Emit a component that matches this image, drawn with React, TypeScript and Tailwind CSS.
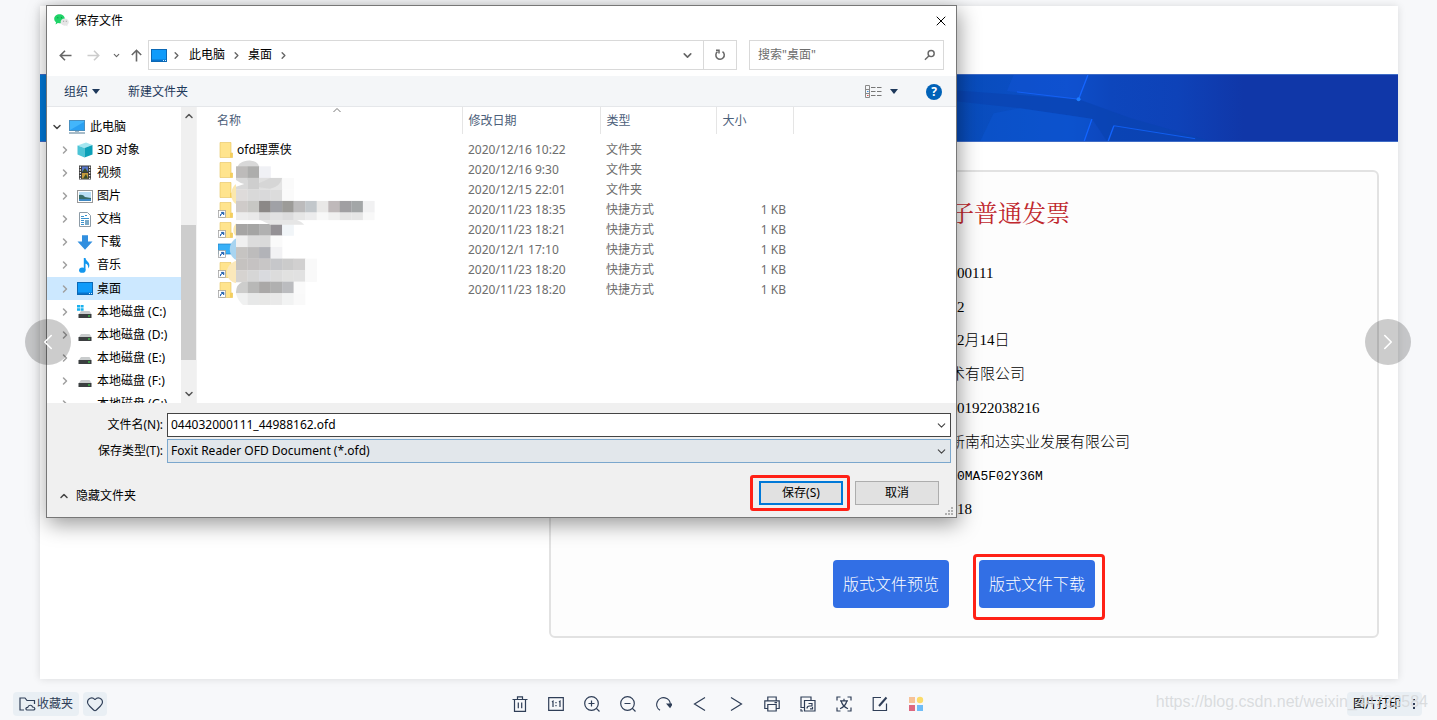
import { useState } from "react";
import type { ReactNode } from "react";
import { ChevronDown, ChevronLeft, ChevronRight, ChevronUp, Heart, X } from "lucide-react";

interface FileRow {
  name: string;
  icon: "folder" | "link" | "pc";
  date: string;
  type: string;
  size: string;
}

const FILES: FileRow[] = [
  { name: "ofd理票侠", icon: "folder", date: "2020/12/16 10:22", type: "文件夹", size: "" },
  { name: "", icon: "folder", date: "2020/12/16 9:30", type: "文件夹", size: "" },
  { name: "", icon: "folder", date: "2020/12/15 22:01", type: "文件夹", size: "" },
  { name: "", icon: "link", date: "2020/11/23 18:35", type: "快捷方式", size: "1 KB" },
  { name: "", icon: "link", date: "2020/11/23 18:21", type: "快捷方式", size: "1 KB" },
  { name: "", icon: "pc", date: "2020/12/1 17:10", type: "快捷方式", size: "1 KB" },
  { name: "", icon: "link", date: "2020/11/23 18:20", type: "快捷方式", size: "1 KB" },
  { name: "", icon: "link", date: "2020/11/23 18:20", type: "快捷方式", size: "1 KB" },
];

const TREE: Array<{ label: string; icon: ReactNode }> = [
  { label: "3D 对象", icon: <CubeIcon /> },
  { label: "视频", icon: <FilmIcon /> },
  { label: "图片", icon: <PictureIcon /> },
  { label: "文档", icon: <DocIcon /> },
  { label: "下载", icon: <DownloadIcon /> },
  { label: "音乐", icon: <MusicIcon /> },
  { label: "桌面", icon: <DesktopIcon /> },
  { label: "本地磁盘 (C:)", icon: <DriveIcon system /> },
  { label: "本地磁盘 (D:)", icon: <DriveIcon /> },
  { label: "本地磁盘 (E:)", icon: <DriveIcon /> },
  { label: "本地磁盘 (F:)", icon: <DriveIcon /> },
  { label: "本地磁盘 (G:)", icon: <DriveIcon /> },
];

export default function App() {
  return (
    <div className="relative flex min-h-screen flex-col bg-[#f7f8fa] font-['Noto_Sans','Noto_Sans_CJK_SC',sans-serif] text-xs text-black">
      <main className="relative grow pl-10 pr-[39px] pt-[6px]">
        <InvoicePage />
        <SaveDialog />
        <button aria-label="上一张" className="absolute left-[25px] top-[319px] flex size-[46px] items-center justify-center rounded-full bg-black/20 text-white">
          <ChevronLeft size={26} strokeWidth={1.5} />
        </button>
        <button aria-label="下一张" className="absolute right-[26px] top-[319px] flex size-[46px] items-center justify-center rounded-full bg-black/20 text-white">
          <ChevronRight size={26} strokeWidth={1.5} />
        </button>
      </main>
      <ViewerBar />
    </div>
  );
}

function InvoicePage() {
  return (
    <div className="bg-white pb-[41px] pt-[68px] shadow-[0_0_8px_rgba(0,0,0,0.12)]">
      <Banner />
      <section className="ml-[509px] mr-[19px] mt-[28px] rounded-md border-2 border-[#e2e2e2] bg-[#fdfdfd] pb-[28px] pt-[26px]">
        <h1 className="pl-[399px] font-['Liberation_Serif','Noto_Serif_CJK_SC','Noto_Sans_CJK_SC',serif] text-2xl leading-8 text-[#c0272d]">子普通发票</h1>
        <div className="mt-[27px] grid h-[270px] grid-rows-8 items-center pl-[399px] font-['Liberation_Serif','Noto_Sans_CJK_SC',serif] text-[15px] font-light text-black">
          <p className="pl-[7px]">00111</p>
          <p className="pl-[7px]">2</p>
          <p className="pl-[7px]">2月14日</p>
          <p>术有限公司</p>
          <p className="pl-[7px]">01922038216</p>
          <p>新南和达实业发展有限公司</p>
          <p className="pl-[7px] font-['Liberation_Mono',monospace] text-[13px]">0MA5F02Y36M</p>
          <p className="pl-[7px]">18</p>
        </div>
        <div className="mt-[33px] flex justify-center gap-[30px]">
          <button className="h-12 w-[116px] rounded bg-[#326fe5] text-base font-light text-white">版式文件预览</button>
          <div className="relative">
            <button className="h-12 w-[116px] rounded bg-[#326fe5] text-base font-light text-white">版式文件下载</button>
            <div className="pointer-events-none absolute -bottom-3 -left-[6px] -right-[10px] -top-[6px] rounded-sm border-[3px] border-[#ff2116]" />
          </div>
        </div>
      </section>
    </div>
  );
}

function Banner() {
  return (
    <div className="flex h-[68px] justify-end border-y border-[#3f6cc6] bg-[#0078d7]">
      <svg viewBox="0 0 1324 199" className="h-full w-[441px]" preserveAspectRatio="none">
        <defs>
          <linearGradient id="sky">
            <stop offset="0" stopColor="#084cba" />
            <stop offset="0.25" stopColor="#0d4fca" />
            <stop offset="0.35" stopColor="#0d46bc" />
            <stop offset="0.5" stopColor="#0e42b8" />
            <stop offset="0.65" stopColor="#1037a8" />
            <stop offset="1" stopColor="#1037a8" />
          </linearGradient>
        </defs>
        <rect width="1324" height="199" fill="url(#sky)" />
        <path d="M0 47 L365 73 L520 130 L760 199 L450 199 L405 132 L190 100 L0 80Z" fill="#0a43b0" opacity=".7" />
        <path d="M170 0 L150 48 L365 73 L392 0Z" fill="#1255d8" opacity=".45" />
        <path d="M110 115 L190 100 L405 132 L380 199 L70 199Z" fill="#0b55d2" opacity=".5" />
        <path d="M180 51 L365 73" fill="none" stroke="#1565ff" strokeWidth="3" opacity=".8" />
        <path d="M365 73 L393 0" fill="none" stroke="#1565ff" strokeWidth="4" />
        <path d="M405 133 L382 199 M454 199 L471 153" fill="none" stroke="#1264ff" strokeWidth="4" />
        <path d="M471 153 L715 192" fill="none" stroke="#1264ff" strokeWidth="3" opacity=".8" />
        <circle cx="365" cy="73" r="6" fill="#1d7dff" />
      </svg>
    </div>
  );
}

function SaveDialog() {
  const [fileName, setFileName] = useState("044032000111_44988162.ofd");

  return (
    <div role="dialog" aria-label="保存文件" className="absolute left-[46px] top-[5px] w-[911px] border border-[#777] bg-white shadow-[2px_6px_20px_rgba(0,0,0,0.4)]">
      {/* title */}
      <div className="flex h-[29px] items-center pl-[7px] pr-[7px]">
        <WechatIcon />
        <span className="ml-[6px]">保存文件</span>
        <button aria-label="关闭" className="ml-auto">
          <X size={16} strokeWidth={1.5} />
        </button>
      </div>

      {/* address bar */}
      <div className="flex items-center pb-[6px] pl-3 pr-3 pt-[5px] text-[#666]">
        <button aria-label="后退"><ArrowIcon /></button>
        <button aria-label="前进" className="ml-[15px] text-[#ccc]"><ArrowIcon className="rotate-180" /></button>
        <button aria-label="最近" className="ml-3"><ChevronDown size={9} strokeWidth={3} /></button>
        <button aria-label="向上" className="ml-[9px]"><ArrowIcon className="rotate-90" /></button>
        <div className="ml-[5px] flex h-[30px] grow items-center border border-[#d9d9d9] pl-[2px] text-black">
          <DesktopIcon />
          <ChevronRight size={11} strokeWidth={3} className="ml-[4px] text-[#666]" />
          <span className="ml-[7px]">此电脑</span>
          <ChevronRight size={11} strokeWidth={3} className="ml-[6px] text-[#666]" />
          <span className="ml-[6px]">桌面</span>
          <ChevronRight size={11} strokeWidth={3} className="ml-[6px] text-[#666]" />
          <button aria-label="展开" className="ml-auto mr-[9px] text-[#666]"><ChevronDown size={13} strokeWidth={3} /></button>
          <button aria-label="刷新" className="flex h-full w-[33px] items-center justify-center border-l border-[#d9d9d9] text-[#666]">
            <svg width="12" height="12" viewBox="0 0 12 12" fill="none" stroke="currentColor" strokeWidth="1.5">
              <path d="M8.5 2.6 A4.2 4.2 0 1 1 3.5 2.7 M2 1.2 H5 V4.5" />
            </svg>
          </button>
        </div>
        <div className="ml-3 flex h-[30px] w-[195px] items-center border border-[#d9d9d9] px-[8px]">
          <input aria-label="搜索桌面" placeholder={'搜索"桌面"'} className="min-w-0 grow outline-none placeholder:text-[#6d6d6d]" />
          <svg width="12" height="12" viewBox="0 0 12 12" fill="none" stroke="currentColor" strokeWidth="1.5">
            <circle cx="7.5" cy="4.5" r="3.2" />
            <path d="M5 7 L1 11" />
          </svg>
        </div>
      </div>

      {/* commands */}
      <div className="flex h-[31px] items-center border-b border-[#e5e7ea] bg-[#f4f6f8] pl-[17px] pr-[14px] pt-px text-[#1e395b]">
        <button className="flex items-center gap-1">组织<TriangleDown /></button>
        <button className="ml-7">新建文件夹</button>
        <button aria-label="视图" className="ml-auto flex items-center gap-2">
          <ViewIcon />
          <TriangleDown />
        </button>
        <button aria-label="帮助" className="ml-7 flex size-4 items-center justify-center rounded-full bg-[#0062b8] font-bold text-white">?</button>
      </div>

      <div className="flex h-[296px]">
        <FolderTree />
        <FileList />
      </div>

      {/* footer */}
      <div className="bg-[#f0f0f0] pb-[12px] pl-3 pr-[5px] pt-[10px]">
        <div className="grid grid-cols-[104px_1fr] items-center gap-x-1 gap-y-[2px]">
          <label htmlFor="file-name" className="text-right">文件名(N):</label>
          <div className="flex h-6 items-center border border-[#444] bg-white pl-[3px] pr-[2px]">
            <input id="file-name" value={fileName} onChange={e => setFileName(e.target.value)} className="min-w-0 grow outline-none" />
            <ChevronDown size={13} className="text-[#444]" />
          </div>
          <label htmlFor="file-type" className="text-right">保存类型(T):</label>
          <div className="flex h-6 items-center border border-[#7ba7cd] bg-[#e2e7eb] pl-[3px] pr-[2px]">
            <select id="file-type" className="grow appearance-none outline-none">
              <option>Foxit Reader OFD Document (*.ofd)</option>
            </select>
            <ChevronDown size={13} className="text-[#444]" />
          </div>
        </div>
        <div className="mt-[18px] flex items-center pr-3">
          <button className="flex items-center gap-[6px] pt-[6px]">
            <ChevronUp size={12} strokeWidth={3} className="-ml-[1px] text-[#444]" />
            隐藏文件夹
          </button>
          <div className="relative ml-auto">
            <button className="h-6 w-[84px] border-2 border-[#0078d7] bg-[#e1e1e1]">保存(S)</button>
            <div className="pointer-events-none absolute -left-[9px] -right-[7px] -inset-y-[6px] rounded-[3px] border-[3px] border-[#ff2116]" />
          </div>
          <button className="ml-3 h-6 w-[84px] border border-[#adadad] bg-[#e1e1e1]">取消</button>
        </div>
      </div>
      <svg width="9" height="9" viewBox="0 0 9 9" className="absolute bottom-[1px] right-[2px]" fill="#b0b0b0">
        <path d="M6 0h2v2h-2z M6 3h2v2h-2z M6 6h2v2h-2z M3 3h2v2h-2z M3 6h2v2h-2z M0 6h2v2h-2z" />
      </svg>
    </div>
  );
}

function FolderTree() {
  return (
    <div className="flex w-[150px] shrink-0 border-r border-[#f3f3f3]">
      <div className="h-full grow overflow-hidden pt-2">
        <ul className="grid h-[301px] grid-rows-13">
          <li className="flex items-center whitespace-nowrap pl-1">
            <ChevronDown size={12} strokeWidth={3} className="text-[#444]" />
            <span className="ml-[6px]"><PcIcon /></span>
            <span className="ml-[5px]">此电脑</span>
          </li>
          {TREE.map(t => (
            <li key={t.label} className={`flex items-center whitespace-nowrap pl-3 ${t.label === "桌面" ? "bg-[#cce8ff]" : ""}`}>
              <ChevronRight size={12} strokeWidth={3} className="shrink-0 text-[#a0a0a0]" />
              <span className="ml-[6px] shrink-0">{t.icon}</span>
              <span className="ml-[4px]">{t.label}</span>
            </li>
          ))}
        </ul>
      </div>
      <div className="flex w-[15px] shrink-0 flex-col items-center bg-[#f0f0f0] py-[3px] text-[#555]">
        <ChevronUp size={12} strokeWidth={3} />
        <div className="mt-[103px] h-[135px] w-full bg-[#cdcdcd]" />
        <ChevronDown size={12} strokeWidth={3} className="mt-auto" />
      </div>
    </div>
  );
}

function FileList() {
  return (
    <div className="relative grow">
      <table className="w-full table-fixed text-left text-[#6d6d6d]">
        <thead>
          <tr className="h-[27px] text-[#4c607a]">
            <th className="w-[265px] border-r border-[#e5e5e5] pl-5 font-normal">名称</th>
            <th className="w-[138px] border-r border-[#e5e5e5] pl-[6px] font-normal">修改日期</th>
            <th className="w-[116px] border-r border-[#e5e5e5] pl-[6px] font-normal">类型</th>
            <th className="w-[77px] border-r border-[#e5e5e5] pl-[6px] font-normal">大小</th>
            <th className="font-normal" />
          </tr>
        </thead>
        <tbody className="before:block before:h-[6px]">
          {FILES.map((f, i) => (
            <tr key={i} className="h-5">
              <td className="pl-[21px] text-black">
                <div className="flex items-center gap-1">
                  <FileIcon kind={f.icon} />
                  {f.name}
                </div>
              </td>
              <td className="pl-[6px]">{f.date}</td>
              <td className="pl-[6px]">{f.type}</td>
              <td className="pr-[7px] text-right">{f.size}</td>
              <td />
            </tr>
          ))}
        </tbody>
      </table>
      <svg width="8" height="6" viewBox="0 0 8 6" className="absolute left-[136px] top-0" fill="none" stroke="#777">
        <path d="M0.5 5 L4 1.5 L7.5 5" />
      </svg>
      <Mosaic />
    </div>
  );
}

// hidden file names, one colour per cell
const MOSAIC: string[][] = [
  ["#bdbbba", "#adadac", "#f0f1f5"],
  ["#d9d9d9", "#cecece", "#dfdfdf", "#e4e4e4", "#fafafa"],
  ["#dedbda", "#d9d9d9", "#d9d9da", "#dcdcdc", "#fafafa"],
  ["#cfcbc9", "#c7c7c4", "#8b8887", "#a0a1a6", "#9c9b98", "#bcbbbc", "#c2c7cb", "#e9e8e7", "#bfb9ba", "#a09fa2", "#a3a6a7", "#f1f1f2"],
  ["#ececec", "#e9e9e9", "#dadadb", "#e1e1e2", "#dcdcdd", "#e6e6e6", "#ececed", "#f8f8f8", "#f0f0f0", "#e5e5e5", "#e6e6e6", "#f8f8f8"],
  ["#a6a5a4", "#a5a5a4", "#b1b1b1", "#949195", "#f1f5f8"],
  ["#f0f0f0", "#dcdcdc", "#dadada", "#fafafa"],
  ["#c6c4c2", "#bdbcbc", "#b2b3b8", "#f2f2f4"],
  ["#c5c2c0", "#c5c2c2", "#c8c6c6", "#c6c7ca", "#cbcbcb", "#d1d0d0", "#f9f9f9"],
  ["#d6d3d0", "#d6d6d6", "#d9dade", "#dcdcdc", "#e1e1e0", "#e1e1e1", "#f9f9f9"],
  ["#cdcdcc", "#b8b8b7", "#aaa8a7", "#b0b0b0", "#bbbcbf", "#fafafa"],
  ["#f0f1f1", "#e7e8e8", "#e7e7e6", "#e9e9e9", "#f2f3f3", "#f9f9f9"],
];

function Mosaic() {
  return (
    <svg viewBox="80 90 450 435" className="pointer-events-none absolute left-[30px] top-[53px] h-[145px] w-[150px]">
      <path d="M108 125 C108 100 130 90 152 92 C170 94 176 105 176 112 L176 150 L108 150Z" fill="#d8d8d8" />
      <path d="M108 162 C88 172 88 215 108 222Z" fill="#fbe8ae" />
      <path d="M108 280 C96 290 96 312 108 318Z" fill="#fbe8ae" />
      <path d="M108 325 C80 340 84 380 108 390Z" fill="#a8d4f0" />
      <path d="M108 392 C68 405 72 452 108 460Z" fill="#fbe8ba" />
      {MOSAIC.map((row, y) =>
        row.map((fill, x) => (
          <rect key={`${x}-${y}`} x={107 + x * 34.6} y={109 + y * 34.6} width="35.2" height={y === 4 ? 23 : 35.2} fill={fill} />
        ))
      )}
      <path d="M107 150 Q120 160 132 162 L107 170Z M107 457 H125 Q108 464 107 485Z M107 491 Q112 510 128 525 H107Z" fill="#fff" />
      <path d="M210 144 H245 Q240 170 210 176 L176 172 V160Z" fill="#d6d6d6" />
      <path d="M180 270 H290 Q306 276 312 284 H210Z" fill="#e6e6e6" />
    </svg>
  );
}

function FileIcon({ kind }: { kind: FileRow["icon"] }) {
  return (
    <svg width="15" height="16" viewBox="0 0 15 16">
      {kind === "pc" ? (
        <path d="M0 2 H15 V12 H0Z" fill="#38b0f7" stroke="#1c7fc0" strokeWidth=".7" />
      ) : (
        <>
          <path d="M2 .5 H13 V11 H14.5 V15.5 H2Z" fill="#ffe48d" stroke="#e6c35c" strokeWidth=".6" />
          <path d="M12 11 H14.5 V15.5 H12Z" fill="#f5cf5d" />
        </>
      )}
      {kind !== "folder" && (
        <>
          <rect x=".5" y="8.5" width="7" height="7" fill="#fff" stroke="#999" strokeWidth=".7" />
          <path d="M2.3 14.2 Q2.2 11.8 4.2 11.4 M3.4 10.4 H5.8 V12.8Z" fill="#2362b0" stroke="#2362b0" />
        </>
      )}
    </svg>
  );
}

function ArrowIcon({ className = "" }: { className?: string }) {
  return (
    <svg width="13" height="13" viewBox="0 0 13 13" fill="none" stroke="currentColor" strokeWidth="1.6" className={className}>
      <path d="M12.5 6.5 H1.5 M6 1.8 L1.3 6.5 L6 11.2" />
    </svg>
  );
}

function TriangleDown() {
  return (
    <svg width="8" height="5" viewBox="0 0 8 5" fill="#1e395b">
      <path d="M0 0 H8 L4 5Z" />
    </svg>
  );
}

function ViewIcon() {
  return (
    <svg width="17" height="13" viewBox="0 0 17 13" fill="none" stroke="#8a8a8a">
      <path d="M.5 .5 H4.5 V12.5 H.5Z M.5 4.5 H4.5 M.5 8.5 H4.5" />
      <path d="M6 2.5 H10.5 M12 2.5 H16.5 M6 6.5 H10.5 M12 6.5 H16.5 M6 10.5 H10.5 M12 10.5 H16.5" stroke="#777" />
      <path d="M2 6.5 H3.5" stroke="#3a8ee0" />
      <path d="M2 10.5 H3.5" stroke="#d9534f" />
    </svg>
  );
}

function WechatIcon() {
  return (
    <svg width="15" height="13" viewBox="0 0 15 13">
      <path d="M5.5 0.3 C8.4 .3 10.8 2.2 10.8 4.8 C10.8 7.4 8.4 9.3 5.5 9.3 L3.8 9 L1.6 10.4 L2 8.2 C.8 7.4 .2 6.2 .2 4.8 C.2 2.2 2.6 .3 5.5 .3Z" fill="#1fd368" />
      <path d="M10.7 4.6 C13 4.6 14.8 6.2 14.8 8.1 C14.8 9.3 14.3 10.2 13.3 10.9 L13.6 12.5 L12 11.5 L10.7 11.7 C8.3 11.7 6.6 10.1 6.6 8.1 C6.6 6.2 8.3 4.6 10.7 4.6Z" fill="#e6e6e6" />
      <path d="M3.3 3.2h1v1h-1z M7 3.2h1v1h-1z" fill="#0b8a3c" />
      <path d="M9.1 6.8h1v1h-1z M11.8 6.8h1v1h-1z" fill="#999" />
    </svg>
  );
}

function DesktopIcon() {
  return (
    <svg width="16" height="13" viewBox="0 0 16 13">
      <rect x=".5" y=".5" width="15" height="12" fill="#0f9bfa" stroke="#0b68b5" />
      <path d="M1 10.5 H15 V12 H1Z" fill="#0873cc" />
      <path d="M12 11h1v1h-1z M14 11h1v1h-1z" fill="#d5efff" />
    </svg>
  );
}

function PcIcon() {
  return (
    <svg width="16" height="14" viewBox="0 0 16 14">
      <rect x=".5" y=".5" width="15" height="10" fill="#43b6fb" stroke="#4a90c0" />
      <path d="M1 10 L15 2 V10Z" fill="#2aa0f2" />
      <path d="M6 11 H10 V12 H6Z" fill="#9db4c4" />
      <path d="M0 13 H16" stroke="#7896aa" strokeWidth="1.3" />
    </svg>
  );
}

function CubeIcon() {
  return (
    <svg width="16" height="16" viewBox="0 0 16 16">
      <path d="M.5 3.5 L9 .5 L15.5 3 L7.5 6Z" fill="#a4e6f0" />
      <path d="M.5 3.5 L7.5 6 V15.5 L.5 12.5Z" fill="#4cc4d6" />
      <path d="M15.5 3 L7.5 6 V15.5 L15.5 12.5Z" fill="#0ba0b8" />
    </svg>
  );
}

function FilmIcon() {
  return (
    <svg width="16" height="15" viewBox="0 0 16 15">
      <path d="M2 .5 H14 V14.5 H2Z" fill="#3a3a3a" />
      <path d="M5 1.5 H11 V7 H5Z" fill="#5676c9" />
      <path d="M5 8 H11 V13.5 H5Z" fill="#c59b3c" />
      <path d="M5 7 L8 3 L11 7Z M6 13.5 L9 9 L11 13.5Z" fill="#394d2c" />
      <path d="M3.4 1.5 V14 M12.6 1.5 V14" stroke="#eee" strokeWidth="1.3" strokeDasharray="1.4 1.4" />
    </svg>
  );
}

function PictureIcon() {
  return (
    <svg width="16" height="13" viewBox="0 0 16 13">
      <rect x=".5" y=".5" width="15" height="12" fill="#fff" stroke="#999" />
      <path d="M2 2 H14 V11 H2Z" fill="#b9def5" />
      <path d="M2 5 Q6 4 8 7 L14 8 V9 H2Z" fill="#386c68" />
      <path d="M2 9 H14 V11 H2Z" fill="#3e87c2" />
    </svg>
  );
}

function DocIcon() {
  return (
    <svg width="16" height="15" viewBox="0 0 16 15">
      <path d="M2.5 .5 H10.5 L13.5 3.5 V14.5 H2.5Z" fill="#fff" stroke="#8d9ba6" />
      <path d="M4 4.5 H7 M8 3.5 H10 M4 6.5 H12 M4 8.5 H7 M4 10.5 H7 M4 12.5 H7" stroke="#3b93ce" />
      <path d="M8 8 H12 V13 H8Z" fill="#78a9c8" />
    </svg>
  );
}

function DownloadIcon() {
  return (
    <svg width="16" height="15" viewBox="0 0 16 15">
      <path d="M5 .3 H11 V6.5 H15.5 L8 14.7 L.5 6.5 H5Z" fill="#318fdf" />
    </svg>
  );
}

function MusicIcon() {
  return (
    <svg width="16" height="15" viewBox="0 0 16 15">
      <ellipse cx="5.3" cy="12.2" rx="3.2" ry="2.6" fill="#1296ee" />
      <path d="M6.8 0 H8.5 C8.8 3.5 13.5 4 12.2 8.8 L11 10.6 C11.8 7 9.8 6 8.5 5.8 V12.3 H6.8Z" fill="#1296ee" />
    </svg>
  );
}

function DriveIcon({ system = false }: { system?: boolean }) {
  return (
    <svg width="16" height="14" viewBox="0 0 16 14">
      {system && <path d="M0 0h3v2.5h-3z M3.6 0h3v2.5h-3z M0 3.2h3v2.5h-3z M3.6 3.2h3v2.5h-3z" fill="#19b1ee" />}
      <path d="M4 6 H12.5 L14.5 9 H1.8Z" fill="#c9cccd" />
      <rect x="1.5" y="9" width="13" height="4" fill="#3b3f40" />
      <path d="M11 10.5h2v1h-2z" fill="#3cf04b" />
    </svg>
  );
}

/* viewer toolbar, every drawing on a 16 grid */
const TOOLS: Array<{ label: string; icon: ReactNode }> = [
  { label: "删除", icon: <path d="M.5 3.5 H15.5 M5.5 3 V.8 H10.5 V3 M2.5 3.5 V15.3 H13.5 V3.5 M6.3 6.5 V12.3 M9.7 6.5 V12.3" /> },
  { label: "原始大小", icon: <path d="M.7 1.7 H15.3 V14.3 H.7Z M4 6 L5 5.2 V11 M11 6 L12 5.2 V11 M8 6 V7.2 M8 9 V10.2" /> },
  { label: "放大", icon: <path d="M14.3 7.5 A6.8 6.8 0 1 0 7.5 14.3 A6.8 6.8 0 0 0 14.3 7.5Z M12.4 12.4 L15.5 15.5 M4.5 7.5 H10.5 M7.5 4.5 V10.5" /> },
  { label: "缩小", icon: <path d="M14.3 7.5 A6.8 6.8 0 1 0 7.5 14.3 A6.8 6.8 0 0 0 14.3 7.5Z M12.4 12.4 L15.5 15.5 M4.5 7.5 H10.5" /> },
  { label: "旋转", icon: <><path d="M4 14.3 A6.8 6.8 0 1 1 14.3 9" /><path d="M11.3 8 H16 L14 11.2Z" fill="currentColor" /></> },
  { label: "上一张", icon: <path d="M13 1.5 L2.5 8 L13 14.5" /> },
  { label: "下一张", icon: <path d="M3 1.5 L13.5 8 L3 14.5" /> },
  { label: "打印", icon: <path d="M3.8 4.5 V1 H12.2 V4.5 M3.8 12.5 H.8 V4.8 H15.2 V12.5 H12.2 M3.8 8.5 H12.2 V15 H3.8Z M10.5 6.7 H13" /> },
  { label: "转换", icon: <><path d="M4 11.5 H1 V1 H11 V4 M4.5 4.5 H15 V15 H4.5Z M1 13 V15 H3" /><path d="M7 12.5 Q7 10 9.5 10 M8.5 7.5 H12 V10 H9.5 M12.5 11 V12.8 H10" /></> },
  { label: "识别文字", icon: <path d="M1 4.5 V1 H4.5 M11.5 1 H15 V4.5 M15 11.5 V15 H11.5 M4.5 15 H1 V11.5 M4 4.8 H12 M8 2.8 V4.8 M5.2 5 Q6.5 10.5 12 12.8 M10.8 5 Q9.5 10.5 4 12.8" /> },
  { label: "编辑", icon: <><path d="M9 1.5 H1.2 V14.5 H14.5 V7.5" /><path d="M14.5 1.5 L7 10" strokeWidth="2" /></> },
];

function ViewerBar() {
  return (
    <footer className="grid h-[41px] grid-cols-[1fr_auto_1fr] items-center pl-[13px] pr-[15px] pt-2 text-[#2f3e57]">
      <div className="flex gap-1">
        <button className="flex h-6 items-center gap-[1px] rounded-sm bg-[#e9eff4] px-[6px]">
          <svg width="17" height="14" viewBox="0 0 17 14" fill="none" stroke="currentColor" strokeWidth="1.2">
            <path d="M5 13 H1 V1 H6 L8 3.5 H15.5 V7" />
            <path d="M8.5 13 C6.2 13 6.5 10.2 8.7 10.3 C9.5 7.5 13 7.7 13.5 10 C16.5 10 16.5 13 14.2 13Z" />
          </svg>
          收藏夹
        </button>
        <button aria-label="喜欢" className="flex size-6 items-center justify-center rounded-sm bg-[#e9eff4]">
          <Heart size={18} strokeWidth={1.5} />
        </button>
      </div>
      <div className="flex gap-5">
        {TOOLS.map(t => (
          <button key={t.label} aria-label={t.label}>
            <svg width="16" height="16" viewBox="0 0 16 16" fill="none" stroke="currentColor" strokeWidth="1.2">{t.icon}</svg>
          </button>
        ))}
        <button aria-label="更多应用">
          <svg width="16" height="16" viewBox="0 0 16 16">
            <path d="M1 1h6v6h-6z" fill="#f7c297" />
            <circle cx="12" cy="4" r="3.2" fill="#fbdc6a" />
            <path d="M1 9h6v6h-6z" fill="#de6880" />
            <path d="M9 9h6v6h-6z" fill="#6fbdf7" />
          </svg>
        </button>
      </div>
      <div className="relative flex justify-end">
        <button className="flex h-6 items-center gap-[11px] rounded-sm bg-[#e9eff4] px-[6px] text-black">
          图片打印
          <svg width="4" height="12" viewBox="0 0 4 12" fill="#2f3e57"><path d="M1 1h2v2h-2z M1 5h2v2h-2z M1 9h2v2h-2z" /></svg>
        </button>
        {/* watermark runs over the print button */}
        <span className="pointer-events-none absolute -right-[6px] top-0 whitespace-nowrap font-['Liberation_Sans',sans-serif] text-base leading-5 text-[#d6d8da]/90">https://blog.csdn.net/weixin_44723584</span>
      </div>
    </footer>
  );
}
